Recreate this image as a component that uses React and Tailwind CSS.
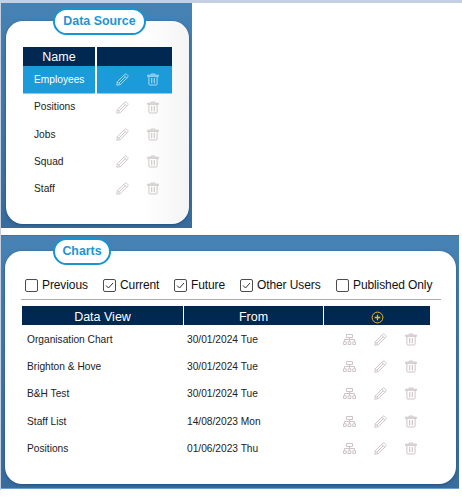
import React from "react";

function Pencil({ className }) {
  return (
    <svg viewBox="0 0 13 13" width="13" height="13" fill="none" stroke="currentColor" strokeWidth="1" strokeLinejoin="round" className={className}>
      <path d="M0.8 12.2 L1.3 8.8 L8.8 1.3 Q9.7 0.5 10.6 1.3 L11.7 2.4 Q12.5 3.3 11.7 4.2 L4.2 11.7 Z" />
      <path d="M7.8 2.3 L10.7 5.2 M1.3 8.8 L4.2 11.7 M3 10 L9.3 3.7" />
    </svg>
  );
}

function Trash({ className }) {
  return (
    <svg viewBox="0 0 12 13" width="12" height="13" fill="none" stroke="currentColor" strokeWidth="1" className={className}>
      <path d="M0.5 2.2 H11.5 V3.3 H0.5 Z M4.2 2.2 V1 H7.8 V2.2" />
      <path d="M1.9 3.3 V11 Q1.9 12 2.9 12 H9.1 Q10.1 12 10.1 11 V3.3" />
      <path d="M4.5 5 V10.3 M7.5 5 V10.3" strokeWidth="0.9" />
      <path d="M6 5 V10.3" strokeWidth="0.5" />
    </svg>
  );
}

function OrgTree({ className }) {
  return (
    <svg viewBox="0 0 13 13" width="13" height="13" fill="none" stroke="currentColor" strokeWidth="1" className={className}>
      <path d="M3.5 1.5 H9.5 V4.5 H3.5 Z M6.5 4.5 V8.5 M1.5 8.5 V6.5 H11.5 V8.5" />
      <path d="M0.5 8.8 H3.2 V11.5 H0.5 Z M5.1 8.8 H7.9 V11.5 H5.1 Z M9.8 8.8 H12.5 V11.5 H9.8 Z" />
    </svg>
  );
}

function Title({ children, className }) {
  return (
    <div className={`absolute left-[52px] flex h-[27px] items-center justify-center rounded-full border-2 border-[#1695d3] bg-white pb-px text-[12.4px] font-bold text-[#2194d3] ${className}`}>
      {children}
    </div>
  );
}

function Check({ label, checked, className }) {
  return (
    <label className={`flex shrink-0 items-center whitespace-nowrap ${className}`}>
      <span className="mr-1 h-[13px] w-[13px] shrink-0 rounded-[2px] border border-[#4d4d4d] bg-white">
        {checked && (
          <svg viewBox="0 0 11 11" width="11" height="11" fill="none" stroke="#333" strokeWidth="1">
            <path d="M2 5.5 L4.5 8 L9 3" />
          </svg>
        )}
      </span>
      {label}
    </label>
  );
}

const sources = ["Employees", "Positions", "Jobs", "Squad", "Staff"];
const views = [
  ["Organisation Chart", "30/01/2024 Tue"],
  ["Brighton & Hove", "30/01/2024 Tue"],
  ["B&H Test", "30/01/2024 Tue"],
  ["Staff List", "14/08/2023 Mon"],
  ["Positions", "01/06/2023 Thu"],
];

export default function App() {
  return (
    <div className="h-[497px] w-[462px] overflow-hidden bg-white font-['Liberation_Sans',Arial,sans-serif] text-[#222]">
      <div className="h-[3px] bg-[#c5cfe2]" />
      <div className="h-[487px] border-l border-[#c5cfe2]">
        <section className="relative h-[225px] w-[191px] bg-linear-to-b from-[#4682b4] to-[#376c9c] pt-[18px] pl-[5px]">
          <div className="h-[203px] w-[183px] rounded-[17px] bg-linear-to-r from-white from-75% to-[#f4f4f4] pt-[26px] pl-[17px] shadow-[0_1px_3px_#234f7c]">
            <div className="grid h-[19px] w-[149px] grid-cols-[72px_75px] gap-[2px] text-center text-[12.5px] leading-[20px] text-white">
              <div className="bg-[#002850]">Name</div>
              <div className="bg-[#002850]" />
            </div>
            {sources.map((name, i) => (
              <div
                key={name}
                className={`grid w-[149px] grid-cols-[72px_75px] gap-[2px] text-[10.2px] ${i === 0 ? "h-[28px] text-white" : "h-[27.2px] pb-px"}`}
              >
                <div className={`flex items-center pl-[11px] ${i === 0 ? "border-b border-[#8bcbeb] bg-[#1c9bdb]" : ""}`}>{name}</div>
                <div className={`flex items-center pl-[19px] ${i === 0 ? "border-b border-[#8bcbeb] bg-[#1c9bdb] text-[#a9d9f2]" : "text-[#cfc8c8]"}`}>
                  <Pencil />
                  <Trash className="ml-[18px]" />
                </div>
              </div>
            ))}
          </div>
          <Title className="top-[5px] w-[93px]">Data Source</Title>
        </section>
        <section className="relative mt-[7px] h-[254px] w-[458px] border-t border-b border-t-[#3476ad] border-b-[#6c9dcc] bg-linear-to-b from-[#4682b4] to-[#376c9c] pt-[15px] pl-[4px]">
          <div className="h-[233px] w-[451px] rounded-[17px] bg-white pt-[27px] pl-[16px] shadow-[0_1px_3px_#234f7c]">
            <div className="flex h-[22px] w-[420px] border-b border-[#aaa] pl-1 text-[12px] leading-[14px] tracking-[-0.1px] text-[#111]">
              <Check label="Previous" className="h-[14px] w-[78px]" />
              <Check label="Current" checked className="h-[14px] w-[71px]" />
              <Check label="Future" checked className="h-[14px] w-[66px]" />
              <Check label="Other Users" checked className="h-[14px] w-[96px]" />
              <Check label="Published Only" className="h-[14px]" />
            </div>
            <div className="mt-[6px] ml-px grid h-[19px] w-[408px] grid-cols-[161px_139px_106px] gap-px text-center text-[12.5px] leading-[22px] text-white">
              <div className="h-[19px] bg-[#002850]">Data View</div>
              <div className="h-[19px] bg-[#002850]">From</div>
              <div className="flex h-[19px] items-center justify-center bg-[#002850]">
                <svg className="mt-[3px]" width="13" height="13" viewBox="0 0 13 13" fill="none" stroke="#e9b92f">
                  <circle cx="6.5" cy="6.5" r="5.4" />
                  <path d="M6.5 3.7 V9.3 M3.7 6.5 H9.3" strokeWidth="1.3" />
                </svg>
              </div>
            </div>
            <div className="pt-px">
              {views.map(([name, from]) => (
                <div key={name} className="ml-px grid h-[27.2px] w-[408px] grid-cols-[161px_139px_106px] gap-px text-[10.2px]">
                  <div className="flex items-center pl-[5px]">{name}</div>
                  <div className="flex items-center pl-[3px]">{from}</div>
                  <div className="flex items-center pl-[19px] text-[#cfc3c6]">
                    <OrgTree />
                    <Pencil className="ml-[18px]" />
                    <Trash className="ml-[18px]" />
                  </div>
                </div>
              ))}
            </div>
          </div>
          <Title className="top-[2px] w-[58px]">Charts</Title>
        </section>
      </div>
    </div>
  );
}
